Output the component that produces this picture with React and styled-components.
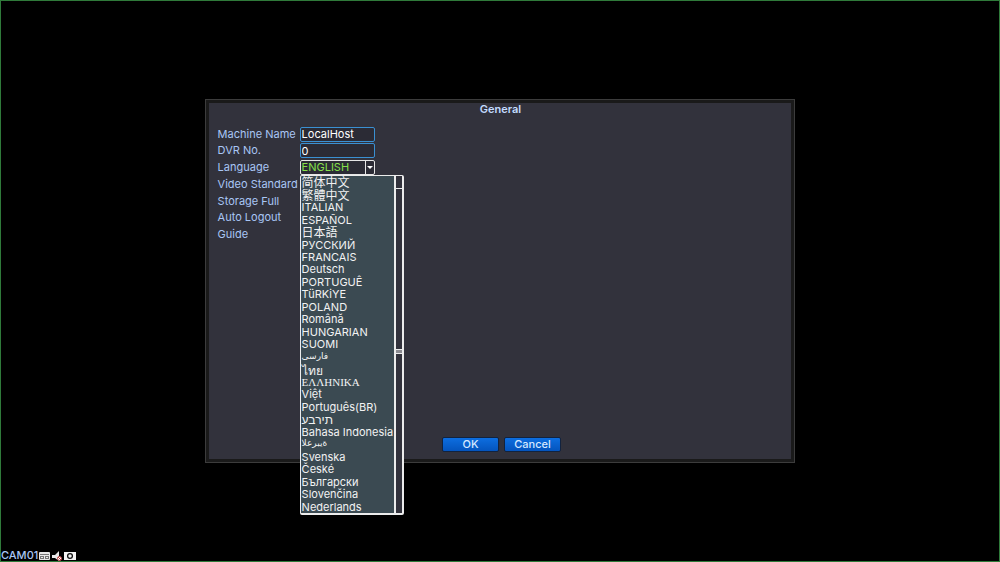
import React, { useState } from 'react'
import styled, { createGlobalStyle } from 'styled-components'

const GlobalStyle = createGlobalStyle`
    * {
        box-sizing: border-box;
    }
    body {
        margin: 0;
        background: #000;
        font-family: Inter, "Liberation Sans", "Noto Sans CJK SC", sans-serif;
        font-size: 11px;
        line-height: 13px;
    }
    button, input, select {
        font: inherit;
    }
`

const Screen = styled.div`
    display: flex;
    flex-direction: column;
    min-height: 100vh;
    border: 1px solid #2f7a3a;
    background: #000;
`

const Stage = styled.main`
    flex: 1;
    display: flex;
    align-items: center;
    justify-content: center;
    padding-top: 11px;
`

const Dialog = styled.form`
    display: flex;
    flex-direction: column;
    width: 59%;
    min-height: calc(65vh - 3px);
    padding: 0 8px 7px 9px;
    background: #32323c;
    border: 3px solid #1a1a1a;
    outline: 1px solid #3c3c3c;
`

const Title = styled.h1`
    margin: 0 0 10px;
    text-align: center;
    font-size: 11px;
    font-weight: 600;
    line-height: 13px;
    color: #c3dcff;
`

const Fields = styled.div`
    display: grid;
    grid-auto-rows: 1fr;
    height: 117px;
    margin-bottom: auto;
`

const Row = styled.div`
    display: flex;
    align-items: center;
`

const Label = styled.label`
    width: 82px;
    white-space: nowrap;
    color: #a9c6f5;
`

const TextBox = styled.input`
    width: 75px;
    height: 15px;
    padding: 0 1px;
    background: #2b2b35;
    border: 1px solid #3a90d2;
    border-radius: 2px;
    color: #fff;
    outline: none;
`

const Combo = styled.div`
    position: relative;
    display: flex;
    width: 75px;
`

const Select = styled.select`
    appearance: none;
    width: 100%;
    height: 15px;
    padding: 0 1px;
    background: #2b2b35;
    border: 1px solid #e6e6e6;
    border-radius: 2px;
    color: #86e04a;
    outline: none;
`

const Arrow = styled.svg`
    position: absolute;
    right: 1px;
    top: 1px;
    width: 9px;
    height: 13px;
    pointer-events: none;
`

const Popup = styled.div`
    position: absolute;
    top: 15px;
    left: 0;
    z-index: 1;
    display: flex;
    border: 2px solid #ececec;
    border-left-width: 1px;
    border-top-width: 1px;
    border-radius: 2px;
    background: #3b4a52;
`

const List = styled.ul`
    display: grid;
    grid-auto-rows: 1fr;
    width: 93px;
    height: 337px;
    margin: 0;
    padding: 0 0 0 1px;
    list-style: none;
`

const scripts = {
    cjk: '12px/11px "Noto Sans CJK SC", sans-serif',
    greek: '11px/13px "Liberation Serif", serif',
    arabic: '9px/11px "DejaVu Sans", sans-serif',
    thai: '12px/15px "Noto Sans", "DejaVu Sans", sans-serif',
    hebrew: '12px/15px "Liberation Sans", "DejaVu Sans", sans-serif',
}

const Option = styled.li`
    min-height: 0;
    font: ${props => scripts[props.$script] || 'inherit'};
    color: #f2f2f2;
    white-space: nowrap;
    cursor: pointer;
    &:hover {
        color: #86e04a;
    }
`

const Scroll = styled.div`
    display: flex;
    flex-direction: column;
    width: 8px;
    border-left: 2px solid #ececec;
    background: #32323c;
`

const ScrollUp = styled.div`
    height: 13px;
    border-bottom: 1px solid #ececec;
`

const Thumb = styled.div`
    flex: 1;
    display: flex;
    align-items: center;
`

const Grip = styled.div`
    width: 100%;
    height: 5px;
    background: #8c8c92;
    border: solid #ececec;
    border-width: 1px 0;
`

const Buttons = styled.div`
    display: flex;
    justify-content: center;
    gap: 5px;
    padding-left: 2px;
`

const Button = styled.button`
    width: 57px;
    height: 15px;
    padding: 0;
    background: linear-gradient(#0d6ee0, #0454bd);
    border: 1px solid #12233f;
    border-radius: 2px;
    color: #d5e8ff;
    font-weight: 500;
`

const Status = styled.footer`
    display: flex;
    align-items: center;
    gap: 1px;
    font-weight: 500;
    line-height: 11px;
    color: #a9c6f5;
`

const languages = [
    { name: '简体中文', script: 'cjk' },
    { name: '繁體中文', script: 'cjk' },
    { name: 'ITALIAN' },
    { name: 'ESPAÑOL' },
    { name: '日本語', script: 'cjk' },
    { name: 'РУССКИЙ' },
    { name: 'FRANCAIS' },
    { name: 'Deutsch' },
    { name: 'PORTUGUÊ' },
    { name: 'TüRKiYE' },
    { name: 'POLAND' },
    { name: 'Română' },
    { name: 'HUNGARIAN' },
    { name: 'SUOMI' },
    { name: 'فارسی', script: 'arabic' },
    { name: 'ไทย', script: 'thai' },
    { name: 'ΕΛΛΗΝΙΚΑ', script: 'greek' },
    { name: 'Việt' },
    { name: 'Português(BR)' },
    { name: 'עברית', script: 'hebrew', ltr: true },
    { name: 'Bahasa Indonesia' },
    { name: 'العربية', script: 'arabic', ltr: true },
    { name: 'Svenska' },
    { name: 'České' },
    { name: 'Български' },
    { name: 'Slovenčina' },
    { name: 'Nederlands' },
]

// recorder, muted speaker and motion marks next to the camera name
function CameraIcons() {
    return (
        <svg width="37" height="10" viewBox="0 0 37 10" aria-hidden="true">
            <rect x="0" y="1" width="11" height="8" rx="1" fill="#e8e8e8" />
            <path d="M1 3.5H10" stroke="#777" />
            <rect x="1.5" y="5.5" width="3" height="2" fill="none" stroke="#777" />
            <rect x="6.5" y="5.5" width="3" height="2" fill="none" stroke="#777" />
            <path d="M13 4H16L20 0V10L16 7H13Z" fill="#e8e8e8" />
            <circle cx="20.5" cy="7.5" r="2" fill="#fff" stroke="#b83a3a" />
            <path d="M19 6L22 9" stroke="#b83a3a" />
            <rect x="25" y="1" width="12" height="8" fill="#f4f4f4" />
            <circle cx="31" cy="5" r="2.4" fill="none" stroke="#111" strokeWidth="1.3" />
        </svg>
    )
}

export default function App() {
    const [language, setLanguage] = useState('ENGLISH')

    return (
        <Screen>
            <GlobalStyle />
            <Stage>
                <Dialog>
                    <Title>General</Title>
                    <Fields>
                        <Row>
                            <Label htmlFor="machine-name">Machine Name</Label>
                            <TextBox id="machine-name" type="text" defaultValue="LocalHost" />
                        </Row>
                        <Row>
                            <Label htmlFor="dvr-no">DVR No.</Label>
                            <TextBox id="dvr-no" type="text" defaultValue="0" />
                        </Row>
                        <Row>
                            <Label htmlFor="language">Language</Label>
                            <Combo>
                                <Select id="language" value={language} onChange={ev => setLanguage(ev.target.value)}>
                                    <option>ENGLISH</option>
                                    {languages.map(({ name }) => <option key={name}>{name}</option>)}
                                </Select>
                                <Arrow viewBox="0 0 9 13">
                                    <path d="M0.5 0V13" stroke="#e6e6e6" />
                                    <path d="M2 5H8L5 8Z" fill="#fff" />
                                </Arrow>
                                <Popup>
                                    <List role="listbox" aria-label="Language">
                                        {languages.map(({ name, script, ltr }) => (
                                            <Option
                                                key={name}
                                                role="option"
                                                aria-selected={name === language}
                                                $script={script}
                                                onClick={() => setLanguage(name)}
                                            >
                                                {ltr ? <bdo dir="ltr">{name}</bdo> : name}
                                            </Option>
                                        ))}
                                    </List>
                                    <Scroll>
                                        <ScrollUp />
                                        <Thumb><Grip /></Thumb>
                                    </Scroll>
                                </Popup>
                            </Combo>
                        </Row>
                        <Row><Label as="span">Video Standard</Label></Row>
                        <Row><Label as="span">Storage Full</Label></Row>
                        <Row><Label as="span">Auto Logout</Label></Row>
                        <Row><Label as="span">Guide</Label></Row>
                    </Fields>
                    <Buttons>
                        <Button type="button">OK</Button>
                        <Button type="button">Cancel</Button>
                    </Buttons>
                </Dialog>
            </Stage>
            <Status>
                CAM01
                <CameraIcons />
            </Status>
        </Screen>
    )
}
